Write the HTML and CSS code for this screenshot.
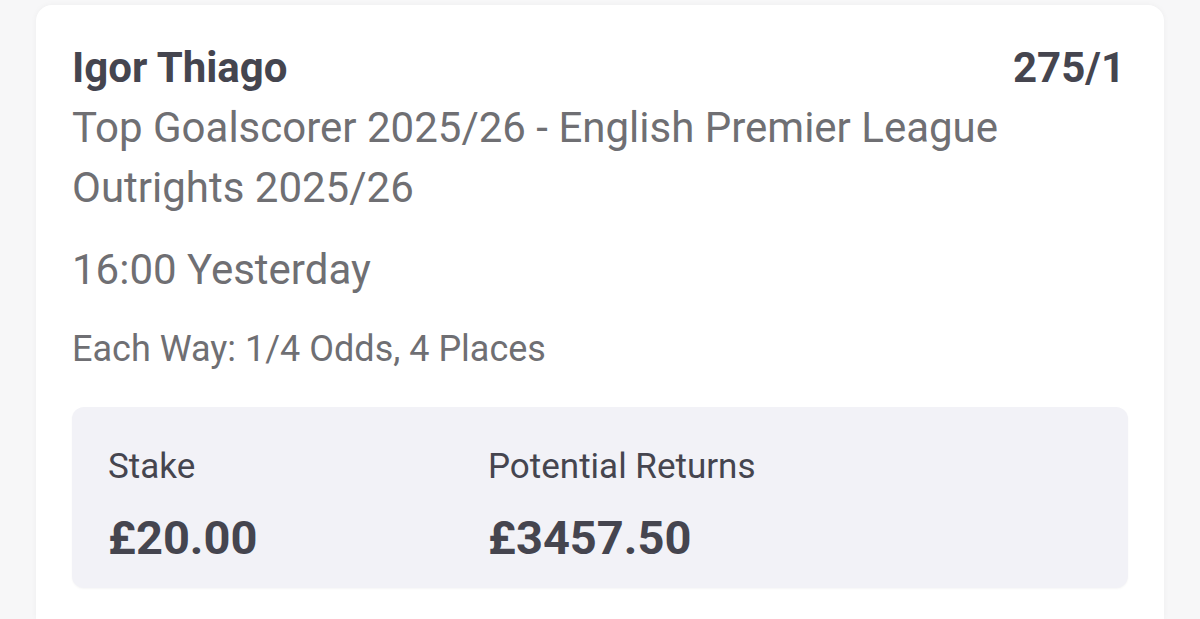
FILE: index.html
```html
<!DOCTYPE html>
<html>
<head>
<meta charset="utf-8">
<link rel="stylesheet" href="styles.css">
</head>
<body>
<div class="card">
  <div class="head">
    <div class="name">Igor Thiago</div>
    <div class="odds">275/1</div>
  </div>
  <div class="market">Top Goalscorer 2025/26 - English Premier League Outrights 2025/26</div>
  <div class="time">16:00 Yesterday</div>
  <div class="ew">Each Way: 1/4 Odds, 4 Places</div>
  <div class="box">
    <div class="col stake">
      <div class="label">Stake</div>
      <div class="value">£20.00</div>
    </div>
    <div class="col">
      <div class="label">Potential Returns</div>
      <div class="value">£3457.50</div>
    </div>
  </div>
</div>
</body>
</html>
```
FILE: styles.css
```css
html, body {
  margin: 0;
  padding: 0;
  background: #f7f7f8;
  height: 100%;
  overflow: hidden;
}
body {
  font-family: Roboto, "Liberation Sans", sans-serif;
  padding: 5px 36px 0 36px;
  box-sizing: border-box;
}
.card {
  background: #ffffff;
  border-radius: 16px 16px 0 0;
  padding: 38px 36px 0 36px;
  height: 100%;
  box-sizing: border-box;
  box-shadow: 0 0 6px rgba(0,0,0,0.04);
}
.head {
  display: flex;
  justify-content: space-between;
  align-items: baseline;
  color: #45454f;
  font-weight: 700;
  font-size: 42px;
  line-height: 50px;
}
.odds {
  margin-right: 3px;
}
.market {
  color: #6f6f73;
  font-size: 42px;
  line-height: 60px;
  margin-top: 5px;
}
.time {
  color: #6f6f73;
  font-size: 42px;
  line-height: 60px;
  margin-top: 22px;
}
.ew {
  color: #6f6f73;
  font-size: 36px;
  line-height: 40px;
  margin-top: 29px;
}
.box {
  margin-top: 38px;
  background: #f2f2f7;
  border-radius: 12px;
  height: 181px;
  display: flex;
  padding: 0 36px;
  box-sizing: border-box;
  box-shadow: 0 1px 2px rgba(0,0,0,0.04);
}
.col {
  padding-top: 40px;
}
.stake {
  width: 380px;
}
.label {
  color: #45454f;
  font-size: 35px;
  line-height: 40px;
}
.value {
  color: #45454f;
  font-size: 47px;
  font-weight: 700;
  line-height: 50px;
  margin-top: 26px;
}
```
